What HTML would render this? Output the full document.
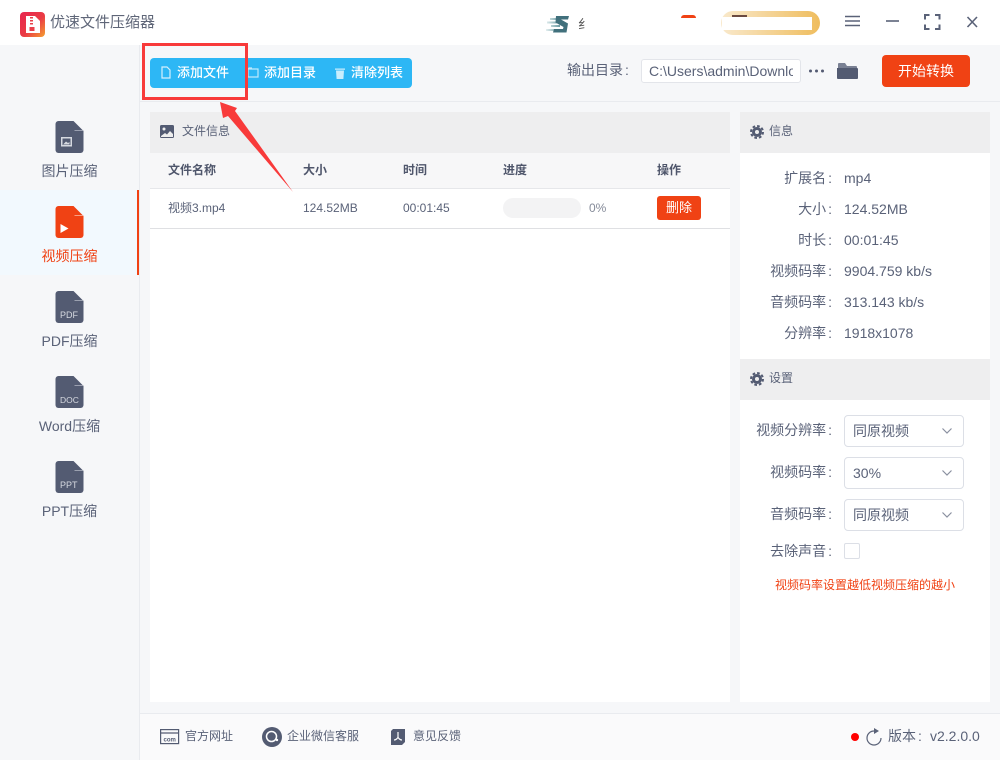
<!DOCTYPE html>
<html lang="zh"><head><meta charset="utf-8"><title>优速文件压缩器</title>
<style>
*{box-sizing:border-box;margin:0;padding:0}
html,body{width:1000px;height:760px;overflow:hidden;background:#f6f7f9}
body{position:relative;font-family:"Liberation Sans","Noto Sans CJK SC",sans-serif;font-size:13px;color:#5a6278}
.a{position:absolute;white-space:nowrap}
.r{position:absolute;white-space:nowrap;text-align:right;right:168px;line-height:18px;font-size:14px}
.v{position:absolute;white-space:nowrap;left:844px;line-height:18px;font-size:14px}
.c{margin-left:2px}
.nav{position:absolute;left:0;width:139px;text-align:center;font-size:14px}
.sel{position:absolute;left:844px;width:120px;height:32px;background:#fff;border:1px solid #dcdfe6;border-radius:4px;padding-left:8px;line-height:30px;font-size:14px}
.sel svg{position:absolute;right:11px;top:12px}
.b{font-weight:700;color:#4f566b;font-size:12px}
.t{font-size:13px;color:#fff;font-weight:500;line-height:18px;top:64px}
</style></head><body>
<!-- title bar -->
<div class="a" style="left:0;top:0;width:1000px;height:45px;background:#fff"></div>
<svg class="a" style="left:20px;top:12px" width="25" height="25" viewBox="0 0 25 25"><defs><linearGradient id="g" x1="0" y1="0" x2="1" y2="1"><stop offset="0" stop-color="#e8264f"/><stop offset=".55" stop-color="#ea3b45"/><stop offset="1" stop-color="#f5a02f"/></linearGradient></defs><rect width="25" height="25" rx="4" fill="url(#g)"/><path d="M6 4h9l5 5v12H6z" fill="#fff"/><path d="M10 5h3v1.500h-3zM10 8h3v1.500h-3zM10 11h3v1.500h-3zM9.500 15h5v4h-5z" fill="#e8404a"/></svg>
<div class="a" style="left:50px;top:13px;font-size:15px;color:#5f6678;line-height:20px">优速文件压缩器</div>
<svg class="a" style="left:544px;top:14px" width="28" height="21" viewBox="0 0 28 21"><defs><linearGradient id="s" x1="0" x2="1"><stop offset="0" stop-color="#e4eff0"/><stop offset="1" stop-color="#6a9aa2"/></linearGradient></defs><path d="M6 5h9M3 8.500h10M7 12h9M2 16h13" stroke="url(#s)" stroke-width="2"/><path d="M12 2h13l-1 3.500H17l7 4-1.500 9H9l1-3.500h9l.5-2-8-4.500z" fill="#41707c"/></svg>
<div class="a" style="left:578px;top:14px;font-size:13px;color:#555">纟</div>
<div class="a" style="left:681px;top:15px;width:15px;height:3px;background:#f04214;border-radius:3px 3px 0 0"></div>
<div class="a" style="left:721px;top:11px;width:99px;height:24px;border-radius:12px;background:linear-gradient(90deg,#f9e9cc,#efbd5e)"></div>
<div class="a" style="left:722px;top:17px;width:90px;height:13px;background:#fff"></div>
<div class="a" style="left:732px;top:15px;width:15px;height:2px;background:#6b4a40"></div>
<svg class="a" style="left:840px;top:10px" width="145" height="24" viewBox="0 0 145 24" fill="none" stroke="#5a6278" stroke-width="1.600"><path d="M5 6.500h15M5 11h15M5 15.500h15"/><path d="M46 11h13"/><path d="M85 9.500V5h4.500M95 5h4.500v4.500M99.500 14.500V19H95M89.500 19H85v-4.500" stroke-width="2"/><path d="M127.500 7l9.500 10M137 7l-9.500 10"/></svg>
<!-- sidebar -->
<div class="a" style="left:139px;top:45px;width:1px;height:715px;background:#e9ebef"></div>
<div class="a" style="left:0;top:190px;width:139px;height:85px;background:#f2f9fe;border-right:2px solid #f04214"></div>
<svg width="0" height="0" style="position:absolute"><defs><path id="f" d="M3 0h15l10 10v19a3 3 0 0 1-3 3H3a3 3 0 0 1-3-3V3a3 3 0 0 1 3-3z"/></defs></svg>
<svg class="a" style="left:55px;top:121px" width="29" height="32" viewBox="0 0 28 32"><use href="#f" fill="#535b72"/><path d="M19 9.500h9" stroke="#aeb3c0" stroke-width=".8"/><rect x="5.500" y="16" width="11" height="9.500" fill="#d6d9e0"/><rect x="7" y="17.500" width="8" height="6.500" fill="#535b72"/><path d="M7.500 23.500l3-3 2 1.500 1.500-1v2.500z" fill="#d6d9e0"/></svg>
<div class="nav" style="top:161px">图片压缩</div>
<svg class="a" style="left:55px;top:206px" width="29" height="32" viewBox="0 0 28 32"><use href="#f" fill="#f04214"/><path d="M19 9.500h9" stroke="#f9b8a3" stroke-width=".8"/><path d="M5 18l8 4.500-8 4.500z" fill="#fff"/></svg>
<div class="nav" style="top:246px;color:#f04214">视频压缩</div>
<svg class="a" style="left:55px;top:291px" width="29" height="32" viewBox="0 0 28 32"><use href="#f" fill="#535b72"/><path d="M19 9.500h9" stroke="#aeb3c0" stroke-width=".8"/><text x="4.500" y="27" font-size="9" fill="#d6d9e0" font-family="Liberation Sans">PDF</text></svg>
<div class="nav" style="top:331px">PDF压缩</div>
<svg class="a" style="left:55px;top:376px" width="29" height="32" viewBox="0 0 28 32"><use href="#f" fill="#535b72"/><path d="M19 9.500h9" stroke="#aeb3c0" stroke-width=".8"/><text x="4.500" y="27" font-size="8.500" fill="#d6d9e0" font-family="Liberation Sans">DOC</text></svg>
<div class="nav" style="top:416px">Word压缩</div>
<svg class="a" style="left:55px;top:461px" width="29" height="32" viewBox="0 0 28 32"><use href="#f" fill="#535b72"/><path d="M19 9.500h9" stroke="#aeb3c0" stroke-width=".8"/><text x="4.500" y="27" font-size="9" fill="#d6d9e0" font-family="Liberation Sans">PPT</text></svg>
<div class="nav" style="top:501px">PPT压缩</div>
<!-- toolbar -->
<div class="a" style="left:140px;top:101px;width:860px;height:1px;background:#e9ebef"></div>
<div class="a" style="left:150px;top:58px;width:262px;height:30px;background:#2db7f5;border-radius:4px"></div>
<svg class="a" style="left:161px;top:66px" width="10" height="13" viewBox="0 0 10 13" fill="none" stroke="#d5f0fd" stroke-width="1.200"><path d="M1 1h5l3 3v8H1z"/></svg>
<div class="a t" style="left:177px">添加文件</div>
<svg class="a" style="left:247px;top:67px" width="13" height="12" viewBox="0 0 13 12" fill="none" stroke="#bfe9fc" stroke-width="1.200"><path d="M1 2h10v8H1zM1 2l1-1h3"/></svg>
<div class="a t" style="left:264px">添加目录</div>
<svg class="a" style="left:335px;top:67px" width="10" height="12" viewBox="0 0 10 12"><path d="M0 1.500h10v1.200H0zM1 3.500h8l-.6 8.500H1.600z" fill="#c9eefd"/></svg>
<div class="a t" style="left:351px">清除列表</div>
<div class="a" style="left:567px;top:61px;font-size:14px;line-height:18px">输出目录<span class="c">:</span></div>
<div class="a" style="left:641px;top:59px;width:160px;height:24px;background:#fff;border:1px solid #e3e5ea;border-radius:3px"></div>
<div class="a" style="left:649px;top:60px;width:144px;height:22px;line-height:22px;font-size:14px;overflow:hidden">C:\Users\admin\Download</div>
<svg class="a" style="left:808px;top:68px" width="17" height="6" viewBox="0 0 17 6" fill="#535b72"><circle cx="2.500" cy="3" r="1.500"/><circle cx="8.500" cy="3" r="1.500"/><circle cx="14.500" cy="3" r="1.500"/></svg>
<svg class="a" style="left:837px;top:62px" width="21" height="18" viewBox="0 0 21 18"><path d="M1 2a1 1 0 0 1 1-1h6l2 3h9a1 1 0 0 1 1 1v1H1z" fill="#7a8194"/><path d="M0 6h20a1 1 0 0 1 1 1v9a1 1 0 0 1-1 1H1a1 1 0 0 1-1-1z" fill="#535b72"/></svg>
<div class="a" style="left:882px;top:55px;width:88px;height:32px;background:#f04214;border-radius:4px;color:#fff;text-align:center;line-height:32px;font-size:14px">开始转换</div>
<!-- main left -->
<div class="a" style="left:150px;top:112px;width:580px;height:41px;background:#eeeeef"></div>
<svg class="a" style="left:160px;top:125px" width="14" height="13" viewBox="0 0 14 13"><rect width="14" height="13" rx="1.500" fill="#535b72"/><circle cx="4" cy="4" r="1.500" fill="#eee"/><path d="M1 11l4-3 2 1.500L10 6l3 3v3H1z" fill="#eee"/></svg>
<div class="a" style="left:182px;top:123px;font-size:12px;line-height:17px">文件信息</div>
<div class="a" style="left:150px;top:153px;width:580px;height:36px;background:#f7f7f8;border-bottom:1px solid #e6e7ea"></div>
<div class="a b" style="left:168px;top:162px;line-height:17px">文件名称</div>
<div class="a b" style="left:303px;top:162px;line-height:17px">大小</div>
<div class="a b" style="left:403px;top:162px;line-height:17px">时间</div>
<div class="a b" style="left:503px;top:162px;line-height:17px">进度</div>
<div class="a b" style="left:657px;top:162px;line-height:17px">操作</div>
<div class="a" style="left:150px;top:189px;width:580px;height:513px;background:#fff"></div>
<div class="a" style="left:150px;top:228px;width:580px;height:1px;background:#dfe0e3"></div>
<div class="a" style="left:168px;top:200px;font-size:12px;line-height:17px">视频3.mp4</div>
<div class="a" style="left:303px;top:200px;font-size:12px;line-height:17px">124.52MB</div>
<div class="a" style="left:403px;top:200px;font-size:12px;line-height:17px">00:01:45</div>
<div class="a" style="left:503px;top:198px;width:78px;height:20px;background:#f3f3f4;border-radius:10px"></div>
<div class="a" style="left:589px;top:200px;font-size:12px;line-height:17px;color:#858b99">0%</div>
<div class="a" style="left:657px;top:196px;width:44px;height:24px;background:#f04214;border-radius:3px;color:#fff;text-align:center;line-height:24px;font-size:13px">删除</div>
<!-- annotation -->
<svg class="a" style="left:140px;top:40px;z-index:5" width="160" height="160" viewBox="0 0 160 160"><rect x="3.500" y="4.500" width="103" height="54" fill="none" stroke="#f83a3a" stroke-width="3"/><path d="M80 62L97 68L95 71L153 152L88 76L83 78z" fill="#f83a3a"/></svg>
<!-- right -->
<div class="a" style="left:740px;top:112px;width:250px;height:590px;background:#fff"></div>
<div class="a" style="left:740px;top:112px;width:250px;height:41px;background:#eeeeef"></div>
<svg class="a" style="left:750px;top:125px" width="14" height="14" viewBox="0 0 14 14"><circle cx="7" cy="7" r="5" fill="#535b72"/><circle cx="7" cy="7" r="6" fill="none" stroke="#535b72" stroke-width="2" stroke-dasharray="2.700 2"/><circle cx="7" cy="7" r="2" fill="#eee"/></svg>
<div class="a" style="left:769px;top:123px;font-size:12px;line-height:17px">信息</div>
<div class="r" style="top:169px">扩展名<span class="c">:</span></div><div class="v" style="top:169px">mp4</div>
<div class="r" style="top:200px">大小<span class="c">:</span></div><div class="v" style="top:200px">124.52MB</div>
<div class="r" style="top:231px">时长<span class="c">:</span></div><div class="v" style="top:231px">00:01:45</div>
<div class="r" style="top:262px">视频码率<span class="c">:</span></div><div class="v" style="top:262px">9904.759 kb/s</div>
<div class="r" style="top:293px">音频码率<span class="c">:</span></div><div class="v" style="top:293px">313.143 kb/s</div>
<div class="r" style="top:324px">分辨率<span class="c">:</span></div><div class="v" style="top:324px">1918x1078</div>
<div class="a" style="left:740px;top:359px;width:250px;height:41px;background:#eeeeef"></div>
<svg class="a" style="left:750px;top:372px" width="14" height="14" viewBox="0 0 14 14"><circle cx="7" cy="7" r="5" fill="#535b72"/><circle cx="7" cy="7" r="6" fill="none" stroke="#535b72" stroke-width="2" stroke-dasharray="2.700 2"/><circle cx="7" cy="7" r="2" fill="#eee"/></svg>
<div class="a" style="left:769px;top:370px;font-size:12px;line-height:17px">设置</div>
<div class="r" style="top:421px">视频分辨率<span class="c">:</span></div>
<div class="sel" style="top:415px">同原视频<svg width="10" height="6" viewBox="0 0 10 6" fill="none" stroke="#8a90a0" stroke-width="1.200"><path d="M.5 .5l4.500 4.500 4.500-4.500"/></svg></div>
<div class="r" style="top:463px">视频码率<span class="c">:</span></div>
<div class="sel" style="top:457px">30%<svg width="10" height="6" viewBox="0 0 10 6" fill="none" stroke="#8a90a0" stroke-width="1.200"><path d="M.5 .5l4.500 4.500 4.500-4.500"/></svg></div>
<div class="r" style="top:505px">音频码率<span class="c">:</span></div>
<div class="sel" style="top:499px">同原视频<svg width="10" height="6" viewBox="0 0 10 6" fill="none" stroke="#8a90a0" stroke-width="1.200"><path d="M.5 .5l4.500 4.500 4.500-4.500"/></svg></div>
<div class="r" style="top:542px">去除声音<span class="c">:</span></div>
<div class="a" style="left:844px;top:543px;width:16px;height:16px;background:#fff;border:1px solid #dcdfe6;border-radius:2px"></div>
<div class="a" style="left:775px;top:577px;font-size:12px;line-height:17px;color:#f04214">视频码率设置越低视频压缩的越小</div>
<!-- footer -->
<div class="a" style="left:140px;top:713px;width:860px;height:47px;background:#fafafb;border-top:1px solid #e9ebef"></div>
<svg class="a" style="left:160px;top:729px" width="20" height="16" viewBox="0 0 20 16"><rect x=".6" y=".6" width="18" height="14" fill="none" stroke="#535b72" stroke-width="1.200"/><path d="M1 4h18" stroke="#535b72" stroke-width="1.200"/><text x="3.500" y="12.500" font-size="6" font-weight="700" fill="#535b72" font-family="Liberation Sans">com</text></svg>
<div class="a" style="left:185px;top:728px;font-size:12px;line-height:17px">官方网址</div>
<svg class="a" style="left:262px;top:727px" width="20" height="20" viewBox="0 0 20 20"><circle cx="10" cy="10" r="10" fill="#535b72"/><circle cx="9.500" cy="9.500" r="5" fill="none" stroke="#fff" stroke-width="1.500"/><circle cx="15" cy="13" r="1.200" fill="#fff"/></svg>
<div class="a" style="left:287px;top:728px;font-size:12px;line-height:17px">企业微信客服</div>
<svg class="a" style="left:390px;top:728px" width="16" height="18" viewBox="0 0 16 18"><path d="M3 1h12v13l-3 3H1V3z" fill="#535b72"/><path d="M8 4v5M4 12c2 0 4-2 4-3 0 1 2 3 4 3" fill="none" stroke="#fff" stroke-width="1.200"/></svg>
<div class="a" style="left:413px;top:728px;font-size:12px;line-height:17px">意见反馈</div>
<div class="a" style="left:851px;top:733px;width:8px;height:8px;border-radius:50%;background:#f00"></div>
<svg class="a" style="left:866px;top:727px" width="17" height="19" viewBox="0 0 17 19" fill="none" stroke="#5a6278" stroke-width="1.200"><path d="M8 4a7 7 0 1 0 7 7"/><path d="M8 1l5 3-5 3z" fill="#5a6278" stroke="none"/></svg>
<div class="a" style="left:888px;top:727px;font-size:14px;line-height:18px">版本<span class="c">:</span></div>
<div class="a" style="left:930px;top:727px;font-size:14px;line-height:18px">v2.2.0.0</div>
</body></html>
